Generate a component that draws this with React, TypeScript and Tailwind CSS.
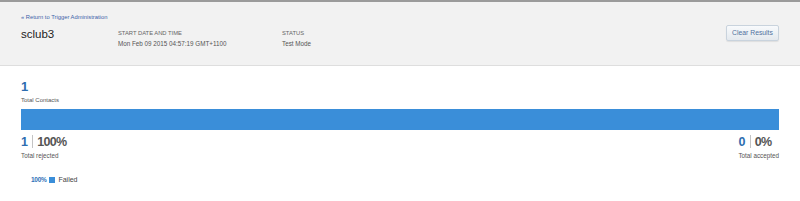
import React from 'react';

const font = { fontFamily: '"Liberation Sans", Arial, sans-serif' };

export default function App() {
  return (
    <div className="w-[800px] h-[201px] bg-white text-[#333]" style={font}>
      {/* Header */}
      <div className="h-[66px] bg-[#f2f2f2] border-t-2 border-[#9b9b9b] border-b border-b-[#dedede] px-[21px]">
        <div className="pt-[11px] text-[5.8px] leading-[8px] text-[#3d62a8]">« Return to Trigger Administration</div>
        <div className="flex items-start mt-[6px]">
          <div className="w-[97px] text-[11.5px] leading-[14px] text-[#222]">sclub3</div>
          <div className="w-[164px] pt-[2px]">
            <div className="text-[5.8px] leading-[8px] text-[#666] uppercase">Start Date and Time</div>
            <div className="text-[6.3px] leading-[8px] text-[#555] mt-[3px]">Mon Feb 09 2015 04:57:19 GMT+1100</div>
          </div>
          <div className="flex-1 pt-[2px]">
            <div className="text-[5.8px] leading-[8px] text-[#666] uppercase">Status</div>
            <div className="text-[6.3px] leading-[8px] text-[#555] mt-[3px]">Test Mode</div>
          </div>
          <button className="mt-[-2px] w-[53px] h-[16px] rounded-[2px] border border-[#c9d3dd] bg-gradient-to-b from-[#f8fafc] to-[#e4e9ee] text-[6.8px] text-[#50709e] shadow-[0_1px_1px_rgba(0,0,0,0.08)]">
            Clear Results
          </button>
        </div>
      </div>

      {/* Body */}
      <div className="px-[21px] pt-[15px]">
        <div className="text-[13px] leading-[12px] font-bold text-[#2d6db0]">1</div>
        <div className="text-[6px] leading-[8px] text-[#555] mt-[3px]">Total Contacts</div>
        <div className="h-[21px] bg-[#3a8ed9] mt-[5px]" />
        <div className="flex justify-between mt-[5px]">
          <div>
            <div className="flex items-center text-[12.5px] leading-[12px] font-bold tracking-[-0.7px]">
              <span className="text-[#2d6db0]">1</span>
              <span className="w-px h-[13px] bg-[#c4c4c4] ml-[5px] mr-[4px]" />
              <span className="text-[#555]">100%</span>
            </div>
            <div className="text-[6.3px] leading-[8px] text-[#555] mt-[4px]">Total rejected</div>
          </div>
          <div className="flex flex-col items-start">
            <div className="flex items-center text-[12.5px] leading-[12px] font-bold tracking-[-0.7px]">
              <span className="text-[#2d6db0]">0</span>
              <span className="w-px h-[13px] bg-[#c4c4c4] ml-[5px] mr-[4px]" />
              <span className="text-[#555]">0%</span>
            </div>
            <div className="text-[6.3px] leading-[8px] text-[#555] mt-[4px]">Total accepted</div>
          </div>
        </div>
        <div className="flex items-center pl-[10px] mt-[15px]">
          <span className="text-[6.5px] font-bold text-[#2f70b8] tracking-[-0.3px]">100%</span>
          <span className="w-[6px] h-[6px] bg-[#3a8ed9] ml-[3px] mr-[3px]" />
          <span className="text-[7px] text-[#444]">Failed</span>
        </div>
      </div>
    </div>
  );
}
